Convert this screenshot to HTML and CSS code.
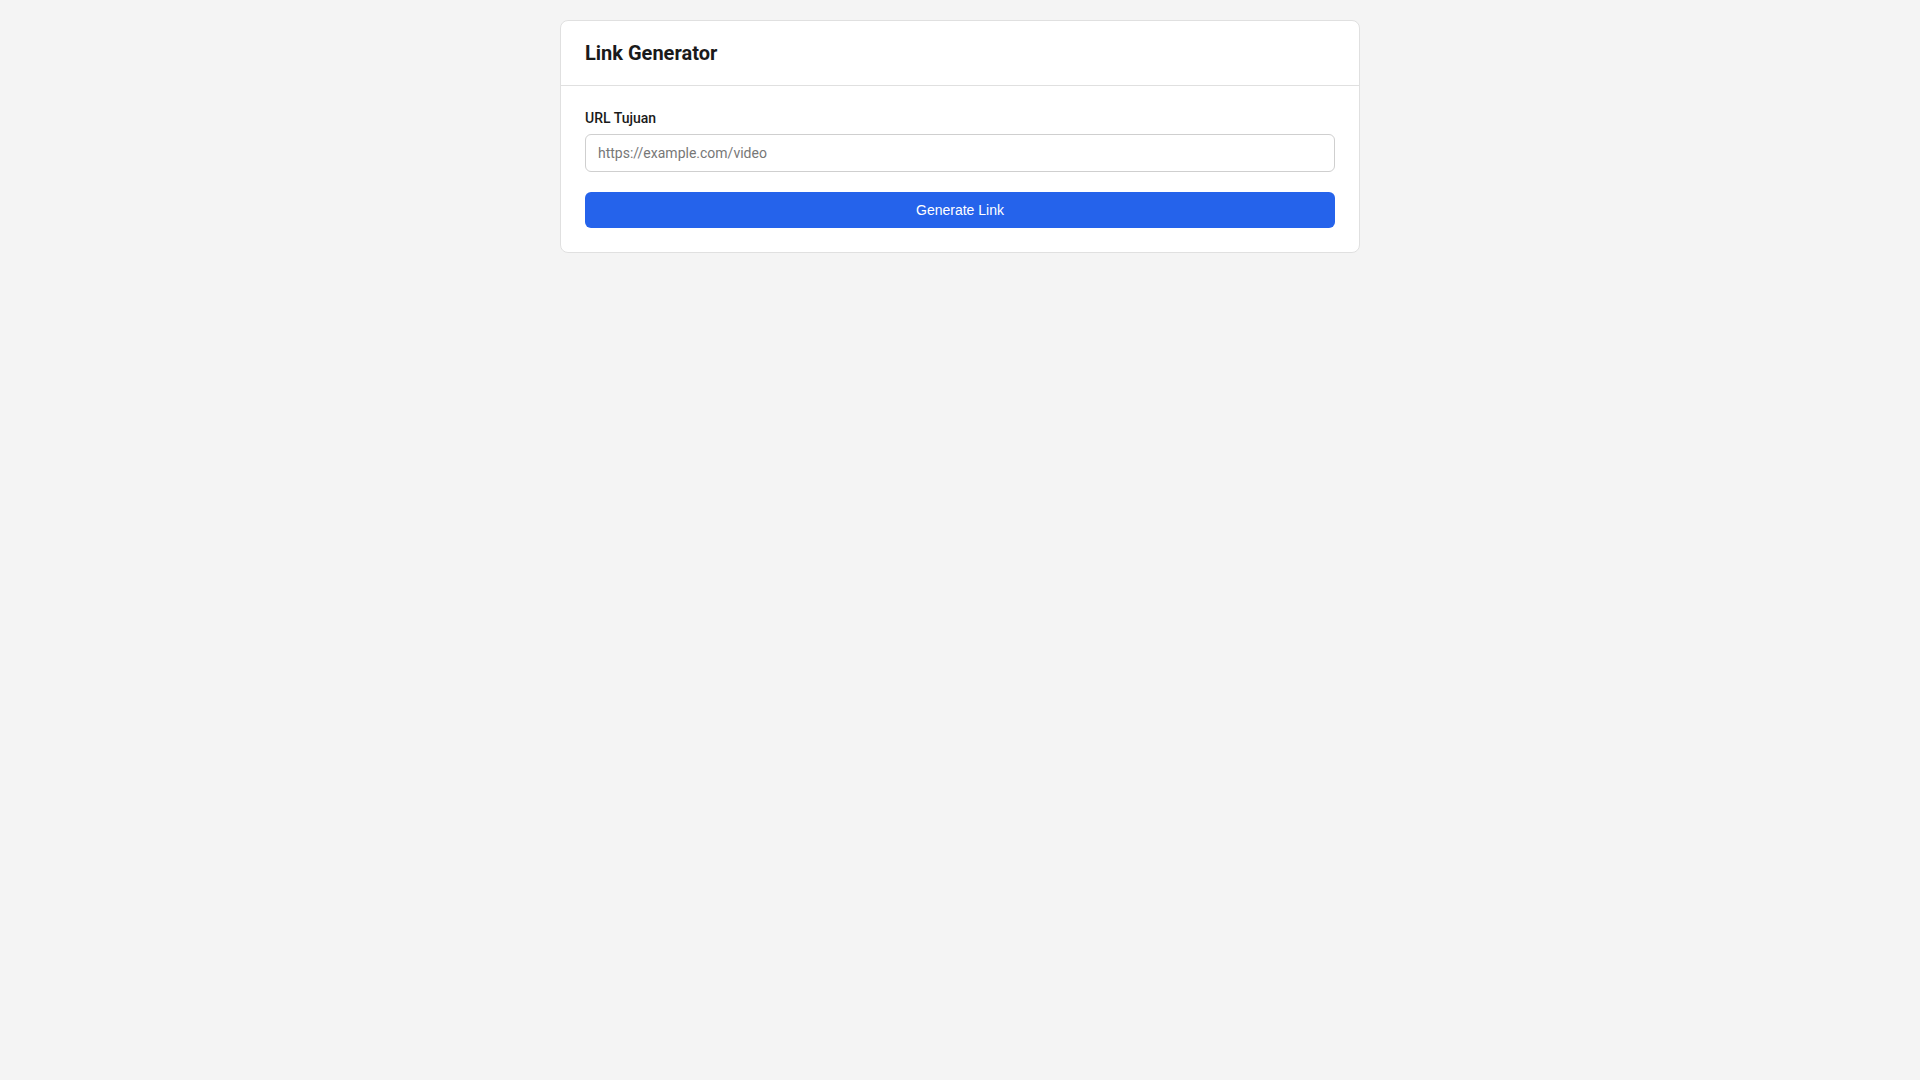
FILE: index.html
```html
<!DOCTYPE html>
<html lang="id">
<head>
<meta charset="utf-8">
<title>Link Generator</title>
<link rel="stylesheet" href="styles.css">
</head>
<body>
<main class="card">
  <header class="card-header">
    <h1 class="title">Link Generator</h1>
  </header>
  <section class="card-body">
    <label class="label" for="url">URL Tujuan</label>
    <input class="input" id="url" type="text" placeholder="https://example.com/video">
    <button class="btn" type="button">Generate Link</button>
  </section>
</main>
</body>
</html>
```

FILE: styles.css
```css
* { box-sizing: border-box; }
html, body { margin: 0; padding: 0; }
body {
  background: #f4f4f4;
  font-family: Roboto, "Liberation Sans", Arial, sans-serif;
  color: #111;
  padding-top: 20px;
}
.card {
  width: 800px;
  margin: 0 auto;
  background: #fff;
  border: 1px solid #e0e0e0;
  border-radius: 8px;
}
.card-header {
  padding: 20px 24px;
  border-bottom: 1px solid #e0e0e0;
}
.title {
  margin: 0;
  font-size: 20px;
  line-height: 24px;
  font-weight: 700;
  color: #1a1a1a;
}
.card-body {
  padding: 24px;
  display: flex;
  flex-direction: column;
}
.label {
  font-size: 14px;
  line-height: 16px;
  font-weight: 500;
  color: #1a1a1a;
  margin-bottom: 8px;
}
.input {
  height: 38px;
  border: 1px solid #cfcfcf;
  border-radius: 6px;
  padding: 0 12px;
  font-family: inherit;
  font-size: 14px;
  color: #111;
  background: #fff;
  outline: none;
}
.input::placeholder { color: #777; }
.btn {
  margin-top: 20px;
  height: 36px;
  border: none;
  border-radius: 6px;
  background: #2563eb;
  color: #fff;
  font-family: "Liberation Sans", Arial, sans-serif;
  font-size: 14px;
  cursor: pointer;
}
```
